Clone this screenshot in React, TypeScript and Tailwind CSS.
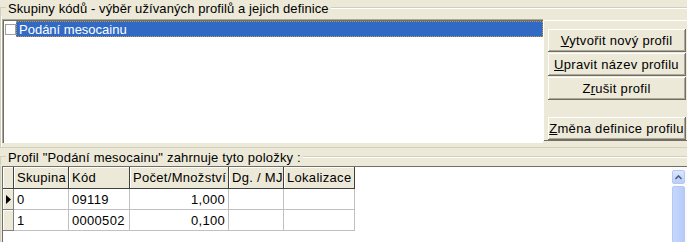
import React from 'react'

const font = { fontFamily: '"Liberation Sans", Arial, sans-serif' }

const columns = [
  { label: 'Skupina', w: 'w-[55px]', right: false },
  { label: 'Kód', w: 'w-[61px]', right: false },
  { label: 'Počet/Množství', w: 'w-[99px]', right: true },
  { label: 'Dg. / MJ', w: 'w-[55px]', right: false },
  { label: 'Lokalizace', w: 'w-[71px]', right: false },
]

const rows = [
  ['0', '09119', '1,000', '', ''],
  ['1', '0000502', '0,100', '', ''],
]

function GroupLine() {
  return <div className="h-0 border-t border-b border-t-[#D0D0BF] border-b-white" />
}

function Legend({ text, className = '' }: { text: string; className?: string }) {
  return (
    <div className="flex h-4 items-start">
      <div className="mt-[7px] h-[9px] w-[6px] border-l border-t border-[#D0D0BF]" />
      <span className={`px-[2px] pt-[2px] leading-[13px] ${className}`}>{text}</span>
      <div className="mt-[7px] flex-1">
        <GroupLine />
      </div>
    </div>
  )
}

function XpButton({ children, className = '' }: { children: React.ReactNode; className?: string }) {
  return (
    <div
      className={`flex h-[23px] w-[138px] items-center justify-center border-r border-b border-[#716F64] bg-[#ECE9D8] tracking-[0.3px] shadow-[inset_1px_1px_0_#fff,inset_-1px_-1px_0_#ACA899] ${className}`}
    >
      {children}
    </div>
  )
}

function Triangle() {
  return (
    <svg width="5" height="9" viewBox="0 0 5 9">
      <path d="M0 0 L5 4.5 L0 9 Z" fill="#000" />
    </svg>
  )
}

function ScrollBar() {
  return (
    <div className="ml-auto flex w-[16px] flex-col gap-[2px] bg-[#FCFCFE] pl-[1px] pr-[2px] pt-[3px]">
      <div className="flex h-[14px] items-center justify-center rounded-[2px] border border-[#B4C8F6] bg-gradient-to-b from-[#DCE6FD] to-[#B9CDF8]">
        <svg width="7" height="5" viewBox="0 0 7 5">
          <path d="M0.5 4 L3.5 1 L6.5 4" stroke="#4D6185" strokeWidth="1.6" fill="none" />
        </svg>
      </div>
      <div className="flex-1 rounded-[2px] border border-[#B4C8F6] bg-gradient-to-r from-[#C6D7FC] to-[#B6CBF8]" />
    </div>
  )
}

export default function App() {
  return (
    <div className="h-[242px] w-[687px] overflow-hidden bg-[#ECE9D8] text-[13px] leading-none text-black" style={font}>
      <Legend text="Skupiny kódů - výběr užívaných profilů a jejich definice" className="tracking-[0.1px]" />
      <div className="flex h-[132px] border-b border-l border-[#D0D0BF] pl-[1px] pt-[3px] shadow-[inset_1px_0_0_#fff]">
        {/* list of profiles */}
        <div className="h-[124px] w-[541px] border-l border-t border-[#ACA899] border-b-white border-r-white">
          <div className="h-full border-l border-t border-[#716F64] bg-white">
            <div className="flex items-center">
              <div className="ml-[1px] h-[11px] w-[11px] border border-[#A0A0A0] bg-white" />
              <div className="flex h-[16px] flex-1 items-center border border-dotted border-[#C8963A] bg-[#316AC5] pl-[2px] text-white">
                Podání mesocainu
              </div>
            </div>
          </div>
        </div>
        {/* buttons */}
        <div className="mt-[1px] flex h-[121px] flex-1 flex-col border-l border-t border-white pl-[4px] pt-[8px] shadow-[inset_0_-1px_0_#716F64]">
          <XpButton className="mb-[1px]">
            <span><u>V</u>ytvořit nový profil</span>
          </XpButton>
          <XpButton className="mb-[1px]">
            <span><u>U</u>pravit název profilu</span>
          </XpButton>
          <XpButton className="mb-[1px]">
            <span>Z<u>r</u>ušit profil</span>
          </XpButton>
          <XpButton className="mt-[16px]">
            <span><u>Z</u>měna definice profilu</span>
          </XpButton>
        </div>
      </div>

      <div className="mt-[1px]">
        <Legend text={'Profil "Podání mesocainu" zahrnuje tyto položky :'} className="tracking-[0.2px]" />
      </div>
      <div className="mt-[1px] flex h-[77px] border-l border-[#D0D0BF] pl-[1px]">
        <div className="flex flex-1 border-l border-t border-[#716F64] bg-white">
          <div className="flex flex-col">
            {/* header */}
            <div className="flex h-[22px]">
              <div className="w-[11px] border-b border-r border-[#404040] bg-[#ECE9D8] shadow-[inset_1px_1px_0_#fff]" />
              {columns.map((c) => (
                <div
                  key={c.label}
                  className={`${c.w} flex items-center border-b border-r border-[#404040] bg-[#ECE9D8] pl-[3px] tracking-[0.3px] shadow-[inset_1px_1px_0_#fff]`}
                >
                  {c.label}
                </div>
              ))}
            </div>
            {rows.map((r, i) => (
              <div key={i} className="flex h-[21px]">
                <div className="flex w-[11px] items-center justify-center border-b border-r border-[#808080] bg-[#ECE9D8] shadow-[inset_1px_1px_0_#fff]">
                  {i === 0 && <Triangle />}
                </div>
                {columns.map((c, j) => (
                  <div
                    key={c.label}
                    className={`${c.w} flex items-center border-b border-r border-[#C0C0C0] tracking-[0.3px] ${c.right ? 'justify-end pr-[3px]' : 'pl-[3px]'}`}
                  >
                    {r[j]}
                  </div>
                ))}
              </div>
            ))}
          </div>
          <ScrollBar />
        </div>
      </div>
    </div>
  )
}
